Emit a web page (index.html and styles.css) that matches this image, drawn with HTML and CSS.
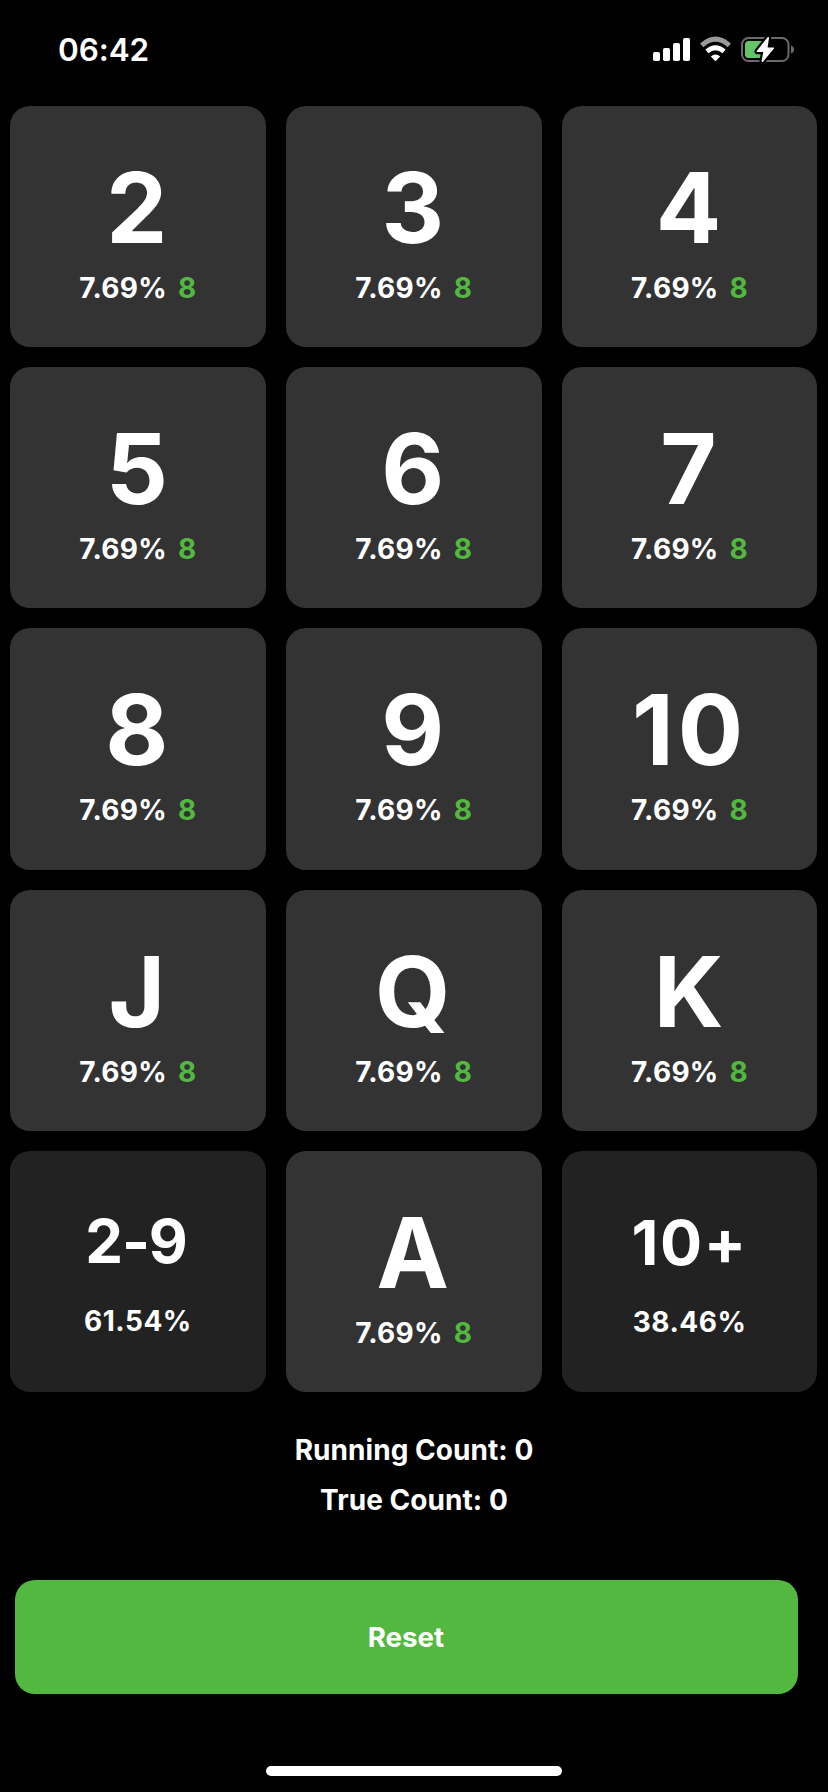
FILE: index.html
```html
<!DOCTYPE html>
<html lang="en"><head><meta charset="utf-8"><title>Card Counter</title><link rel="stylesheet" href="styles.css"></head>
<body>
<header class="status"><span class="time">06:42</span>
<svg class="indicators" width="148" height="32" viewBox="650 34 148 32">
<g fill="#fff"><rect x="653" y="52" width="7" height="9" rx="1.8"/><rect x="663" y="48" width="7" height="13" rx="1.8"/><rect x="673" y="43" width="7" height="18" rx="1.8"/><rect x="683" y="38" width="7" height="23" rx="1.8"/></g>
<path d="M701.7 45.4Q715.5 33 729.3 45.4" stroke="#999" fill="none" stroke-width="5"/>
<path d="M706.9 51.3Q715.5 44 724.1 51.3" stroke="#fff" fill="none" stroke-width="4.8"/>
<path d="M710.8 56.4Q715.5 52.8 720.2 56.4L715.5 61.2Z" fill="#fff"/>
<rect x="742" y="38" width="46.5" height="23" rx="6.5" fill="none" stroke="#6b6b6b" stroke-width="2"/><path d="M791 45.5q3 1 3 4t-3 4z" fill="#6b6b6b"/><rect x="745" y="41" width="20" height="17" rx="3.5" fill="#65c466"/>
<path d="M768.2 37.8L757.5 51.3H764.2L762.4 61.2L773.2 48.2H766.7Z" fill="#000" stroke="#000" stroke-width="6" stroke-linejoin="round"/>
<path d="M768.2 37.8L757.5 51.3H764.2L762.4 61.2L773.2 48.2H766.7Z" fill="#fff" stroke="#fff" stroke-width="1.6" stroke-linejoin="round"/></svg></header>
<main class="grid" id="grid"></main>
<section class="counts"><p>Running Count: 0</p><p>True Count: 0</p></section>
<button class="reset">Reset</button><div class="home"></div>
<script src="script.js"></script>
</body></html>
```
FILE: styles.css
```css
*{box-sizing:border-box}
body{margin:0;width:828px;height:1792px;background:#000;color:#fff;font-family:Inter,sans-serif;font-weight:650;overflow:hidden}
.status{height:106px;padding:34px 30px 0 58px;display:flex;justify-content:space-between}
.time{font-size:31.5px;line-height:32px;font-weight:570;letter-spacing:-.1px}
.grid{display:grid;grid-template-columns:repeat(3,1fr);grid-auto-rows:241.2px;gap:20px;padding:0 10.5px 0 10px}
.card{background:#333;border-radius:20px;text-align:center;padding-top:42px}
.rank{font-size:97px;line-height:120px;font-weight:720;letter-spacing:2px}
.wide{letter-spacing:4px}
.detail{font-size:28px;line-height:34px;margin-top:3px;letter-spacing:.3px}
.left{color:#53b840;margin-left:11px;font-weight:700}
.group{background:#222;padding-top:52px}
.group .rank{font-size:60px;line-height:76px;letter-spacing:-1.2px;padding-right:4px}
.group .detail{margin-top:25px;letter-spacing:.5px}
.tens{padding-top:53px}
.tens .rank{font-size:62.5px;letter-spacing:1.5px;padding-right:0}
.counts{text-align:center;font-size:28px;line-height:34px;padding-top:41px;letter-spacing:.05px}
.counts p{margin:0 0 16px}
.reset{display:block;width:783px;height:114px;margin:63px 0 0 15px;padding:0 1px 0 0;border:0;border-radius:20px;background:#53b840;color:#fff;font:650 27.7px Inter,sans-serif}
.home{width:296px;height:10px;border-radius:5px;background:#fff;margin:72px auto 0}
```
FILE: script.js
```js
const ranks = ['2','3','4','5','6','7','8','9','10','J','Q','K','2-9','A','10+'];
const totals = {'2-9':'61.54%','10+':'38.46%'};
document.getElementById('grid').innerHTML = ranks.map(r => totals[r]
  ? `<div class="card group${r === '10+' ? ' tens' : ''}"><div class="rank">${r}</div><div class="detail">${totals[r]}</div></div>`
  : `<div class="card"><div class="rank${r === '10' ? ' wide' : ''}">${r}</div><div class="detail">7.69%<span class="left">8</span></div></div>`).join('');
```
